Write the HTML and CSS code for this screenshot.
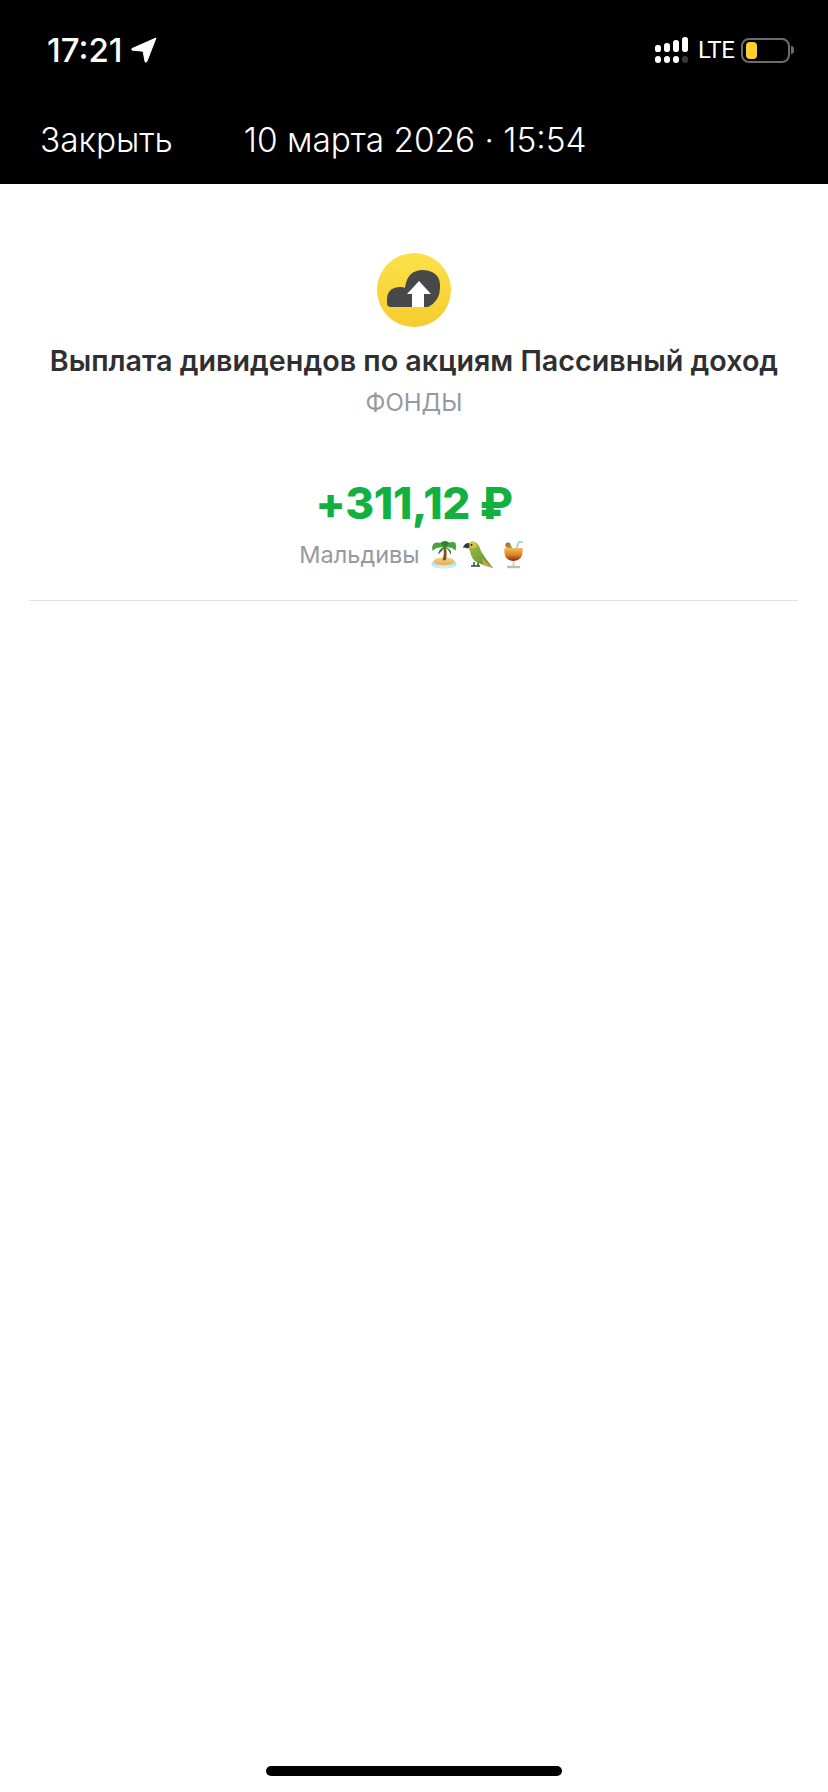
FILE: index.html
```html
<!DOCTYPE html>
<html lang="ru">
<head>
<meta charset="utf-8">
<title>Выплата дивидендов</title>
<link rel="stylesheet" href="styles.css">
</head>
<body>
<div class="screen">
  <header class="top">
    <div class="status">
      <div class="status-left">
        <span class="time">17:21</span>
        <svg class="loc" viewBox="0 0 26 26"><path d="M25 1 L1 11.6 Q0 12.6 1.6 13.2 L12.2 14.2 L14 24.6 Q14.8 26 15.8 24.6 Z" fill="#fff" stroke="#fff" stroke-width="1" stroke-linejoin="round"/></svg>
      </div>
      <div class="status-right">
        <svg class="signal" viewBox="0 0 34 26">
          <g fill="#fff">
            <rect x="0" y="8" width="6" height="7" rx="2.6"/>
            <rect x="0" y="19" width="6" height="7" rx="3"/>
            <rect x="9" y="6" width="6" height="9" rx="2.8"/>
            <rect x="9" y="19" width="6" height="7" rx="3"/>
            <rect x="18" y="3" width="6" height="12" rx="2.8"/>
            <rect x="18" y="19" width="6" height="7" rx="3"/>
            <rect x="27" y="0" width="6" height="15" rx="2.8"/>
            <rect x="27" y="19" width="6" height="7" rx="3" fill="#3a3a3a"/>
          </g>
        </svg>
        <span class="lte">LTE</span>
        <div class="battery"><div class="charge"></div></div>
        <div class="nub"></div>
      </div>
    </div>
    <nav class="nav">
      <span class="close">Закрыть</span>
      <span class="date">10 марта 2026 · 15:54</span>
    </nav>
  </header>
  <main class="body">
    <div class="hero">
      <svg class="badge" viewBox="0 0 74 74">
        <defs>
          <linearGradient id="badgeFill" x1="0" y1="0" x2="0" y2="1">
            <stop offset="0" stop-color="#fde14a"/>
            <stop offset="1" stop-color="#f6cc2e"/>
          </linearGradient>
        </defs>
        <circle cx="37" cy="37" r="37" fill="url(#badgeFill)"/>
        <path d="M14 54 Q10 54 10 50 L10 47 Q10 35 22 34 Q26 33.5 28 35 Q30 17 46 17 Q64 18 63 35 Q63 48 51 54 Z" fill="#47484a"/>
        <path d="M30 41 L42 28 L54 41 H47 V54 H35 V41 Z" fill="#fff"/>
      </svg>
      <h1 class="title">Выплата дивидендов по акциям Пассивный доход</h1>
      <div class="cat">ФОНДЫ</div>
      <div class="amount">+311,12 ₽</div>
      <div class="note">
        <span>Мальдивы</span>
        <svg class="emoji palm" viewBox="0 0 26 30">
          <defs>
            <linearGradient id="sea" x1="0" y1="0" x2="0" y2="1">
              <stop offset="0" stop-color="#8fdcec"/>
              <stop offset="1" stop-color="#d8f3f7"/>
            </linearGradient>
            <linearGradient id="sand" x1="0" y1="0" x2="0" y2="1">
              <stop offset="0" stop-color="#f7d488"/>
              <stop offset="1" stop-color="#eaa94f"/>
            </linearGradient>
          </defs>
          <ellipse cx="13" cy="25" rx="13" ry="5" fill="url(#sea)"/>
          <ellipse cx="13" cy="22" rx="11" ry="4" fill="url(#sand)"/>
          <path d="M11.5 21 Q13.5 14 12.5 7 L15 7 Q16.5 15 15 21 Z" fill="#7d5428"/>
          <path d="M14 8 Q9 0 2 4 Q0 7 1 11 Q7 6 14 8 Z M14 8 Q19 0 25 3 Q26 6 25 11 Q20 6 14 8 Z" fill="#4aa33e"/>
          <path d="M14 7 Q11 12 7 15 Q7 9 14 7 Z M14 7 Q18 10 20 15 Q22 10 14 7 Z M9 3 Q14 -1 19 3 L14 8 Z" fill="#2f8030"/>
        </svg>
        <svg class="emoji parrot" viewBox="0 0 30 29">
          <defs>
            <linearGradient id="plume" x1="0" y1="0" x2="1" y2="1">
              <stop offset="0" stop-color="#a7c248"/>
              <stop offset="1" stop-color="#4f8a34"/>
            </linearGradient>
          </defs>
          <path d="M4 6 Q7 0 12 2 Q16 4 18 11 Q22 18 30 28 Q23 26 18 24 Q10 22 8 15 Q7 11 6 9 Z" fill="url(#plume)"/>
          <path d="M5 5 Q8 0 12 2 Q14 4 14 7 Q9 9 6 8 Z" fill="#dcc03f"/>
          <path d="M6 3 Q1 3 0 8 Q2 7 3 8 Q5 9 6.5 7 Z" fill="#34383d"/>
          <circle cx="8.5" cy="5" r="1" fill="#222"/>
          <path d="M19 18 Q24 23 30 28 L20 25 Z" fill="#c7a53a"/>
          <path d="M8 26 H17 M11 22 V26 M15 23 V26" stroke="#3b3f45" stroke-width="1.5" fill="none"/>
        </svg>
        <svg class="emoji drink" viewBox="0 0 19 29">
          <defs>
            <linearGradient id="cocktail" x1="0" y1="0" x2="0" y2="1">
              <stop offset="0" stop-color="#f0c15a"/>
              <stop offset=".55" stop-color="#de7f22"/>
              <stop offset="1" stop-color="#7c2c12"/>
            </linearGradient>
          </defs>
          <path d="M12 9 L15 2 H19" stroke="#8fc7e8" stroke-width="1.4" fill="none"/>
          <circle cx="4" cy="5" r="2.6" fill="#d2553a"/>
          <path d="M3 5 Q7 3 8 8 H3 Z" fill="#6fae3a"/>
          <path d="M0.5 8 H18.5 Q20 20.5 9.5 21 Q-1 20.5 0.5 8 Z" fill="url(#cocktail)"/>
          <path d="M9.5 21 V26" stroke="#c9c9c9" stroke-width="1.8"/>
          <path d="M3 27 H16" stroke="#bdbdbd" stroke-width="2.4"/>
        </svg>
      </div>
    </div>
    <hr class="rule">
  </main>
  <div class="home"></div>
</div>
</body>
</html>
```

FILE: styles.css
```css
* { box-sizing: border-box; }
html, body { margin: 0; padding: 0; background: #fff; }
.screen {
  width: 828px;
  height: 1792px;
  display: flex;
  flex-direction: column;
  font-family: Inter, "Liberation Sans", sans-serif;
}
.top {
  height: 184px;
  background: #000;
  color: #fff;
  flex: none;
}
.status {
  height: 100px;
  display: flex;
  justify-content: space-between;
  align-items: flex-start;
  padding: 32px 34px 0 47px;
}
.status-left { display: flex; align-items: center; gap: 9px; }
.time { font-size: 33px; line-height: 36px; font-weight: 500; letter-spacing: 0; }
.loc { width: 26px; height: 26px; }
.status-right { display: flex; align-items: center; height: 36px; }
.signal { width: 34px; height: 26px; }
.lte { font-size: 24px; margin-left: 9px; width: 34px; font-family: Roboto, "Liberation Sans", sans-serif; letter-spacing: -0.4px; }
.battery {
  width: 49px;
  height: 25px;
  margin-left: 9px;
  border: 2px solid #6c6c6c;
  border-radius: 8px;
  padding: 2px 3px;
}
.charge { width: 11px; height: 100%; background: #fdd02c; border-radius: 4px; }
.nub { width: 3px; height: 8px; margin-left: 1px; background: #6c6c6c; border-radius: 0 3px 3px 0; }
.nav {
  display: flex;
  align-items: center;
  height: 80px;
  padding: 0 0 0 40px;
  font-size: 33.4px;
  font-weight: 300;
  gap: 71px;
}
.body { flex: 1; display: flex; flex-direction: column; }
.hero {
  display: flex;
  flex-direction: column;
  align-items: center;
  padding-top: 69px;
}
.badge { width: 74px; height: 74px; display: block; }
.title {
  margin: 16px 0 0;
  font-size: 28.7px;
  line-height: 36px;
  font-weight: 600;
  color: #2f2f31;
  white-space: nowrap;
}
.cat { margin-top: 7px; font-size: 24px; line-height: 34px; color: #96999e; }
.amount {
  margin-top: 56px;
  font-size: 44px;
  line-height: 54px;
  font-weight: 800;
  color: #12b13f;
  letter-spacing: -0.3px;
}
.note {
  margin-top: 6px;
  padding-right: 6px;
  display: flex;
  align-items: center;
  height: 36px;
  font-size: 23.5px;
  color: #96999e;
}
.emoji { display: block; height: 29px; }
.palm { width: 26px; margin-left: 11px; }
.parrot { width: 30px; margin-left: 6px; }
.drink { width: 19px; margin-left: 11px; }
.rule {
  margin: 28px 30px 0 29px;
  border: 0;
  border-top: 1px solid #e2e2e4;
  height: 0;
}
.home {
  flex: none;
  width: 296px;
  height: 10px;
  margin: 0 auto 16px;
  background: #000;
  border-radius: 5px;
}
```
